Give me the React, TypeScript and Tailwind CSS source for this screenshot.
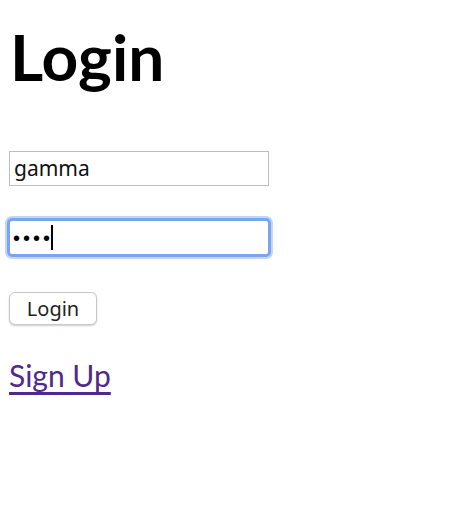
export default function App() {
  return (
    <div className="min-h-[512px] bg-white px-[9px] pt-[18px]" style={{ fontFamily: 'Lato, "Open Sans", sans-serif' }}>
      <h1 className="text-[64px] font-bold leading-none text-black ml-[1px] mt-[7px]">Login</h1>

      <div className="mt-[62px] w-[260px] h-[35px] border border-[#bdbdbd] bg-white flex items-center px-[4px]">
        <span className="text-[21px] text-[#111]" style={{ fontFamily: '"Noto Sans", sans-serif' }}>gamma</span>
      </div>

      <div className="mt-[32px] w-[264px] h-[39px] -ml-[2px] rounded-[5px] border-[3px] border-[#7aa5f0] ring-2 ring-[#c3d6f7] bg-white flex items-center px-[3px]">
        <span className="text-[20px] tracking-[3px] text-black leading-none" style={{ fontFamily: '"Liberation Sans", sans-serif' }}>••••</span>
        <span className="w-[1.5px] h-[25px] bg-black -ml-[2px]"></span>
      </div>

      <button className="mt-[35px] w-[88px] h-[33px] rounded-[6px] border border-[#c8c8c8] bg-white shadow-[0_1px_2px_rgba(0,0,0,0.2)] text-[20px] text-[#222] flex items-center justify-center" style={{ fontFamily: '"Noto Sans", sans-serif' }}>
        Login
      </button>

      <a href="#" className="block mt-[35px] text-[30px] leading-none text-[#4f2a8c] underline underline-offset-[5px] w-fit">Sign Up</a>
    </div>
  )
}
